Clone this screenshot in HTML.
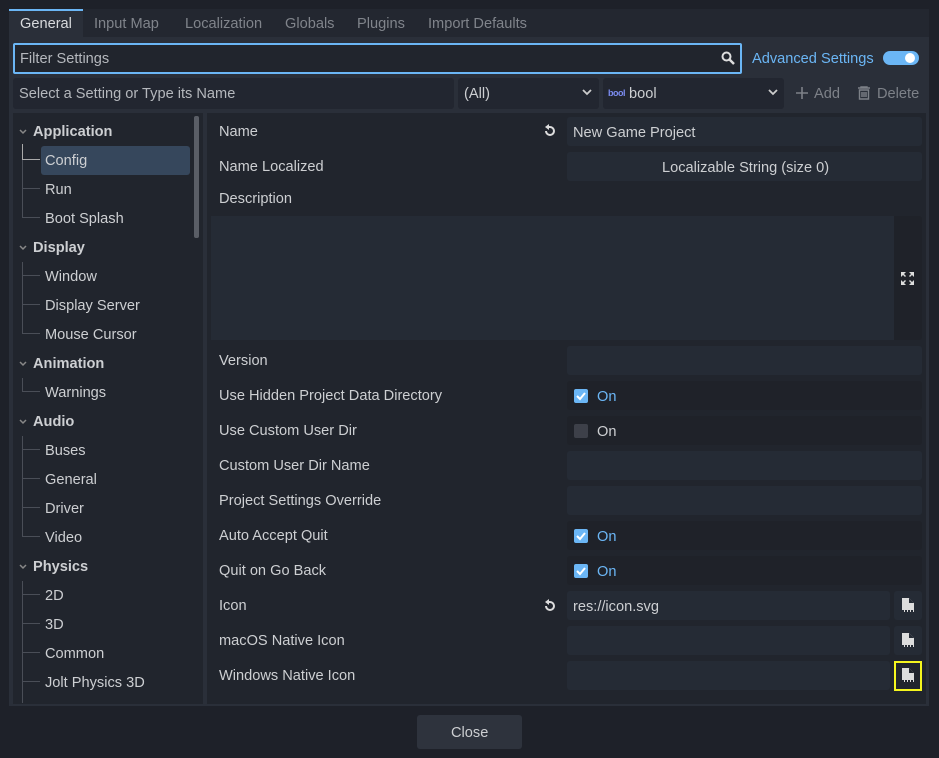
<!DOCTYPE html>
<html><head><style>
*{box-sizing:border-box;margin:0;padding:0}
body{width:939px;height:758px;background:#1e2129;font-family:"Liberation Sans",sans-serif;font-size:14.6px;color:#cdcfd2;position:relative;overflow:hidden}
.a{position:absolute}
.t{position:absolute;white-space:nowrap;line-height:18px;margin-top:1px}
.field{position:absolute;background:#252b35;border-radius:3px}
.dark{position:absolute;background:#1f2229;border-radius:3px}
.cb{position:absolute;width:14px;height:14px;border-radius:2px;background:#6bb6f5}
.cbo{background:#3d4049}
.blue{color:#6bb6f5}
.ln{position:absolute;background:#4a4e57}
.chev{position:absolute;width:10px;height:8px}
</style></head><body>
<div class="a" style="left:9px;top:37px;width:920px;height:669px;background:#2a2f39"></div>
<div class="a" style="left:9px;top:9px;width:920px;height:28px;background:#232730"></div>
<div class="a" style="left:9px;top:9px;width:74px;height:28px;background:#2a2f39;border-top:2px solid #6bb6f5"></div>
<div class="t" style="left:20px;top:14px;color:#d8dadd">General</div>
<div class="t" style="left:94px;top:14px;color:#80848b">Input Map</div>
<div class="t" style="left:185px;top:14px;color:#80848b">Localization</div>
<div class="t" style="left:285px;top:14px;color:#80848b">Globals</div>
<div class="t" style="left:357px;top:14px;color:#80848b">Plugins</div>
<div class="t" style="left:428px;top:14px;color:#80848b">Import Defaults</div>
<div class="a" style="left:13px;top:43px;width:729px;height:31px;background:#21252d;border:2px solid #6bb6f5;border-radius:2px"></div>
<div class="t" style="left:20px;top:49px;color:#b5b8bd">Filter Settings</div>
<svg class="a" style="left:720px;top:50px" width="16" height="16" viewBox="0 0 16 16"><circle cx="6.5" cy="6.5" r="4" fill="none" stroke="#ddd" stroke-width="2"/><path d="M9.5 9.5L14 14" stroke="#ddd" stroke-width="2.5"/></svg>
<div class="t blue" style="left:752px;top:49px">Advanced Settings</div>
<div class="a" style="left:883px;top:51px;width:36px;height:14px;border-radius:7px;background:#6bb6f5"></div>
<div class="a" style="left:905px;top:53px;width:10px;height:10px;border-radius:5px;background:#fff"></div>
<div class="dark" style="left:13px;top:78px;width:441px;height:31px;background:#222630"></div>
<div class="t" style="left:19px;top:84px;color:#b5b8bd">Select a Setting or Type its Name</div>
<div class="dark" style="left:458px;top:78px;width:141px;height:31px;background:#222630"></div>
<div class="t" style="left:464px;top:84px">(All)</div>
<svg class="a" style="left:581px;top:87px" width="12" height="10"><path d="M2 3l4 4 4-4" stroke="#ccc" stroke-width="1.8" fill="none"/></svg>
<div class="dark" style="left:603px;top:78px;width:181px;height:31px;background:#222630"></div>
<div class="t" style="left:608px;top:86px;font-size:9px;font-weight:bold;color:#7b8cf0;line-height:12px;letter-spacing:-0.5px">bool</div>
<div class="t" style="left:629px;top:84px">bool</div>
<svg class="a" style="left:767px;top:87px" width="12" height="10"><path d="M2 3l4 4 4-4" stroke="#ccc" stroke-width="1.8" fill="none"/></svg>
<svg class="a" style="left:795px;top:86px" width="14" height="14"><path d="M7 1v12M1 7h12" stroke="#7d8188" stroke-width="1.6"/></svg>
<div class="t" style="left:814px;top:84px;color:#7d8188">Add</div>
<svg class="a" style="left:857px;top:86px" width="14" height="14"><path d="M1 2h12M4 2V1h6v1M2.5 4h9v9h-9z M5 6v5M7 6v5M9 6v5" stroke="#7d8188" stroke-width="1.4" fill="none"/></svg>
<div class="t" style="left:877px;top:84px;color:#7d8188">Delete</div>
<div class="a" style="left:13px;top:113px;width:190px;height:591px;background:#21252d"></div>
<div class="a" style="left:194px;top:116px;width:5px;height:122px;background:#5a5e66;border-radius:2px"></div>
<div class="a" style="left:41px;top:146px;width:149px;height:29px;background:#36475c;border-radius:3px"></div>
<div class="ln" style="left:22px;top:144px;width:1px;height:15px;background:#aaa"></div>
<div class="ln" style="left:22px;top:159px;width:18px;height:1px;background:#aaa"></div>
<div class="ln" style="left:22px;top:160px;width:1px;height:58px"></div>
<div class="ln" style="left:22px;top:188px;width:18px;height:1px"></div>
<div class="ln" style="left:22px;top:217px;width:18px;height:1px"></div>
<div class="ln" style="left:22px;top:262px;width:1px;height:72px"></div>
<div class="ln" style="left:22px;top:275px;width:18px;height:1px"></div>
<div class="ln" style="left:22px;top:304px;width:18px;height:1px"></div>
<div class="ln" style="left:22px;top:333px;width:18px;height:1px"></div>
<div class="ln" style="left:22px;top:378px;width:1px;height:14px"></div>
<div class="ln" style="left:22px;top:391px;width:18px;height:1px"></div>
<div class="ln" style="left:22px;top:436px;width:1px;height:101px"></div>
<div class="ln" style="left:22px;top:449px;width:18px;height:1px"></div>
<div class="ln" style="left:22px;top:478px;width:18px;height:1px"></div>
<div class="ln" style="left:22px;top:507px;width:18px;height:1px"></div>
<div class="ln" style="left:22px;top:536px;width:18px;height:1px"></div>
<div class="ln" style="left:22px;top:581px;width:1px;height:122px"></div>
<div class="ln" style="left:22px;top:594px;width:18px;height:1px"></div>
<div class="ln" style="left:22px;top:623px;width:18px;height:1px"></div>
<div class="ln" style="left:22px;top:652px;width:18px;height:1px"></div>
<div class="ln" style="left:22px;top:681px;width:18px;height:1px"></div>
<svg class="chev" style="left:18px;top:128px"><path d="M2 2l3 3 3-3" stroke="#888" stroke-width="1.5" fill="none"/></svg>
<svg class="chev" style="left:18px;top:244px"><path d="M2 2l3 3 3-3" stroke="#888" stroke-width="1.5" fill="none"/></svg>
<svg class="chev" style="left:18px;top:360px"><path d="M2 2l3 3 3-3" stroke="#888" stroke-width="1.5" fill="none"/></svg>
<svg class="chev" style="left:18px;top:418px"><path d="M2 2l3 3 3-3" stroke="#888" stroke-width="1.5" fill="none"/></svg>
<svg class="chev" style="left:18px;top:563px"><path d="M2 2l3 3 3-3" stroke="#888" stroke-width="1.5" fill="none"/></svg>
<div class="t" style="left:33px;top:122px;font-weight:bold">Application</div>
<div class="t" style="left:45px;top:151px">Config</div>
<div class="t" style="left:45px;top:180px">Run</div>
<div class="t" style="left:45px;top:209px">Boot Splash</div>
<div class="t" style="left:33px;top:238px;font-weight:bold">Display</div>
<div class="t" style="left:45px;top:267px">Window</div>
<div class="t" style="left:45px;top:296px">Display Server</div>
<div class="t" style="left:45px;top:325px">Mouse Cursor</div>
<div class="t" style="left:33px;top:354px;font-weight:bold">Animation</div>
<div class="t" style="left:45px;top:383px">Warnings</div>
<div class="t" style="left:33px;top:412px;font-weight:bold">Audio</div>
<div class="t" style="left:45px;top:441px">Buses</div>
<div class="t" style="left:45px;top:470px">General</div>
<div class="t" style="left:45px;top:499px">Driver</div>
<div class="t" style="left:45px;top:528px">Video</div>
<div class="t" style="left:33px;top:557px;font-weight:bold">Physics</div>
<div class="t" style="left:45px;top:586px">2D</div>
<div class="t" style="left:45px;top:615px">3D</div>
<div class="t" style="left:45px;top:644px">Common</div>
<div class="t" style="left:45px;top:673px">Jolt Physics 3D</div>
<div class="a" style="left:207px;top:113px;width:719px;height:591px;background:#21252d"></div>
<div class="t" style="left:219px;top:122px">Name</div>
<div class="t" style="left:219px;top:157px">Name Localized</div>
<div class="t" style="left:219px;top:189px">Description</div>
<div class="t" style="left:219px;top:351px">Version</div>
<div class="t" style="left:219px;top:386px">Use Hidden Project Data Directory</div>
<div class="t" style="left:219px;top:421px">Use Custom User Dir</div>
<div class="t" style="left:219px;top:456px">Custom User Dir Name</div>
<div class="t" style="left:219px;top:491px">Project Settings Override</div>
<div class="t" style="left:219px;top:526px">Auto Accept Quit</div>
<div class="t" style="left:219px;top:561px">Quit on Go Back</div>
<div class="t" style="left:219px;top:596px">Icon</div>
<div class="t" style="left:219px;top:631px">macOS Native Icon</div>
<div class="t" style="left:219px;top:666px">Windows Native Icon</div>
<svg class="a" style="left:543px;top:124px" width="14" height="14" viewBox="0 0 14 14"><path d="M3 7a4 4 0 1 0 4-4H5" stroke="#ddd" stroke-width="2" fill="none"/><path d="M6 0L2 3l4 3z" fill="#ddd"/></svg>
<svg class="a" style="left:543px;top:599px" width="14" height="14" viewBox="0 0 14 14"><path d="M3 7a4 4 0 1 0 4-4H5" stroke="#ddd" stroke-width="2" fill="none"/><path d="M6 0L2 3l4 3z" fill="#ddd"/></svg>
<div class="field" style="left:567px;top:117px;width:355px;height:29px"></div>
<div class="t" style="left:573px;top:123px">New Game Project</div>
<div class="field" style="left:567px;top:152px;width:355px;height:29px"></div>
<div class="t" style="left:662px;top:158px">Localizable String (size 0)</div>
<div class="dark" style="left:211px;top:216px;width:711px;height:124px;background:#1f2229"></div>
<div class="a" style="left:211px;top:216px;width:683px;height:124px;background:#252b35"></div>
<svg class="a" style="left:900px;top:271px" width="15" height="15" viewBox="0 0 15 15" fill="#ddd"><path d="M1 1h5L4 3l2 2-1 1-2-2-2 2zM14 1v5l-2-2-2 2-1-1 2-2-2-2zM1 14V9l2 2 2-2 1 1-2 2 2 2zM14 14H9l2-2-2-2 1-1 2 2 2-2z"/></svg>
<div class="field" style="left:567px;top:346px;width:355px;height:29px"></div>
<div class="dark" style="left:567px;top:381px;width:355px;height:29px"></div>
<div class="cb" style="left:574px;top:389px"></div><svg class="a" style="left:574px;top:389px" width="14" height="14"><path d="M3 7l3 3 5-6" stroke="#fff" stroke-width="2" fill="none"/></svg><div class="t blue" style="left:597px;top:387px">On</div>
<div class="dark" style="left:567px;top:416px;width:355px;height:29px"></div>
<div class="cb cbo" style="left:574px;top:424px"></div><div class="t" style="left:597px;top:422px">On</div>
<div class="field" style="left:567px;top:451px;width:355px;height:29px"></div>
<div class="field" style="left:567px;top:486px;width:355px;height:29px"></div>
<div class="dark" style="left:567px;top:521px;width:355px;height:29px"></div>
<div class="cb" style="left:574px;top:529px"></div><svg class="a" style="left:574px;top:529px" width="14" height="14"><path d="M3 7l3 3 5-6" stroke="#fff" stroke-width="2" fill="none"/></svg><div class="t blue" style="left:597px;top:527px">On</div>
<div class="dark" style="left:567px;top:556px;width:355px;height:29px"></div>
<div class="cb" style="left:574px;top:564px"></div><svg class="a" style="left:574px;top:564px" width="14" height="14"><path d="M3 7l3 3 5-6" stroke="#fff" stroke-width="2" fill="none"/></svg><div class="t blue" style="left:597px;top:562px">On</div>
<div class="field" style="left:567px;top:591px;width:323px;height:29px"></div>
<div class="t" style="left:573px;top:597px">res://icon.svg</div>
<div class="field" style="left:567px;top:626px;width:323px;height:29px"></div>
<div class="field" style="left:567px;top:661px;width:323px;height:29px"></div>
<div class="dark" style="left:894px;top:591px;width:28px;height:29px;background:#252b35"></div>
<div class="dark" style="left:894px;top:626px;width:28px;height:29px;background:#252b35"></div>
<div class="a" style="left:894px;top:661px;width:28px;height:30px;border:2px solid #f5f51e"></div>
<svg class="a" style="left:902px;top:598px" width="12" height="14" viewBox="0 0 12 14" fill="#ddd"><path d="M0 0h7l5 5v7H0z"/><path d="M7 0v5h5" fill="#252b35"/><path d="M2 12h1v2H2zM5 12h1v2H5zM8 12h1v2H8zM11 12h1v2h-1z"/></svg>
<svg class="a" style="left:902px;top:633px" width="12" height="14" viewBox="0 0 12 14" fill="#ddd"><path d="M0 0h7l5 5v7H0z"/><path d="M7 0v5h5" fill="#252b35"/><path d="M2 12h1v2H2zM5 12h1v2H5zM8 12h1v2H8zM11 12h1v2h-1z"/></svg>
<svg class="a" style="left:902px;top:668px" width="12" height="14" viewBox="0 0 12 14" fill="#ddd"><path d="M0 0h7l5 5v7H0z"/><path d="M7 0v5h5" fill="#21252d"/><path d="M2 12h1v2H2zM5 12h1v2H5zM8 12h1v2H8zM11 12h1v2h-1z"/></svg>
<div class="a" style="left:417px;top:715px;width:105px;height:34px;background:#2e333d;border-radius:3px"></div>
<div class="t" style="left:451px;top:723px">Close</div>
</body></html>
